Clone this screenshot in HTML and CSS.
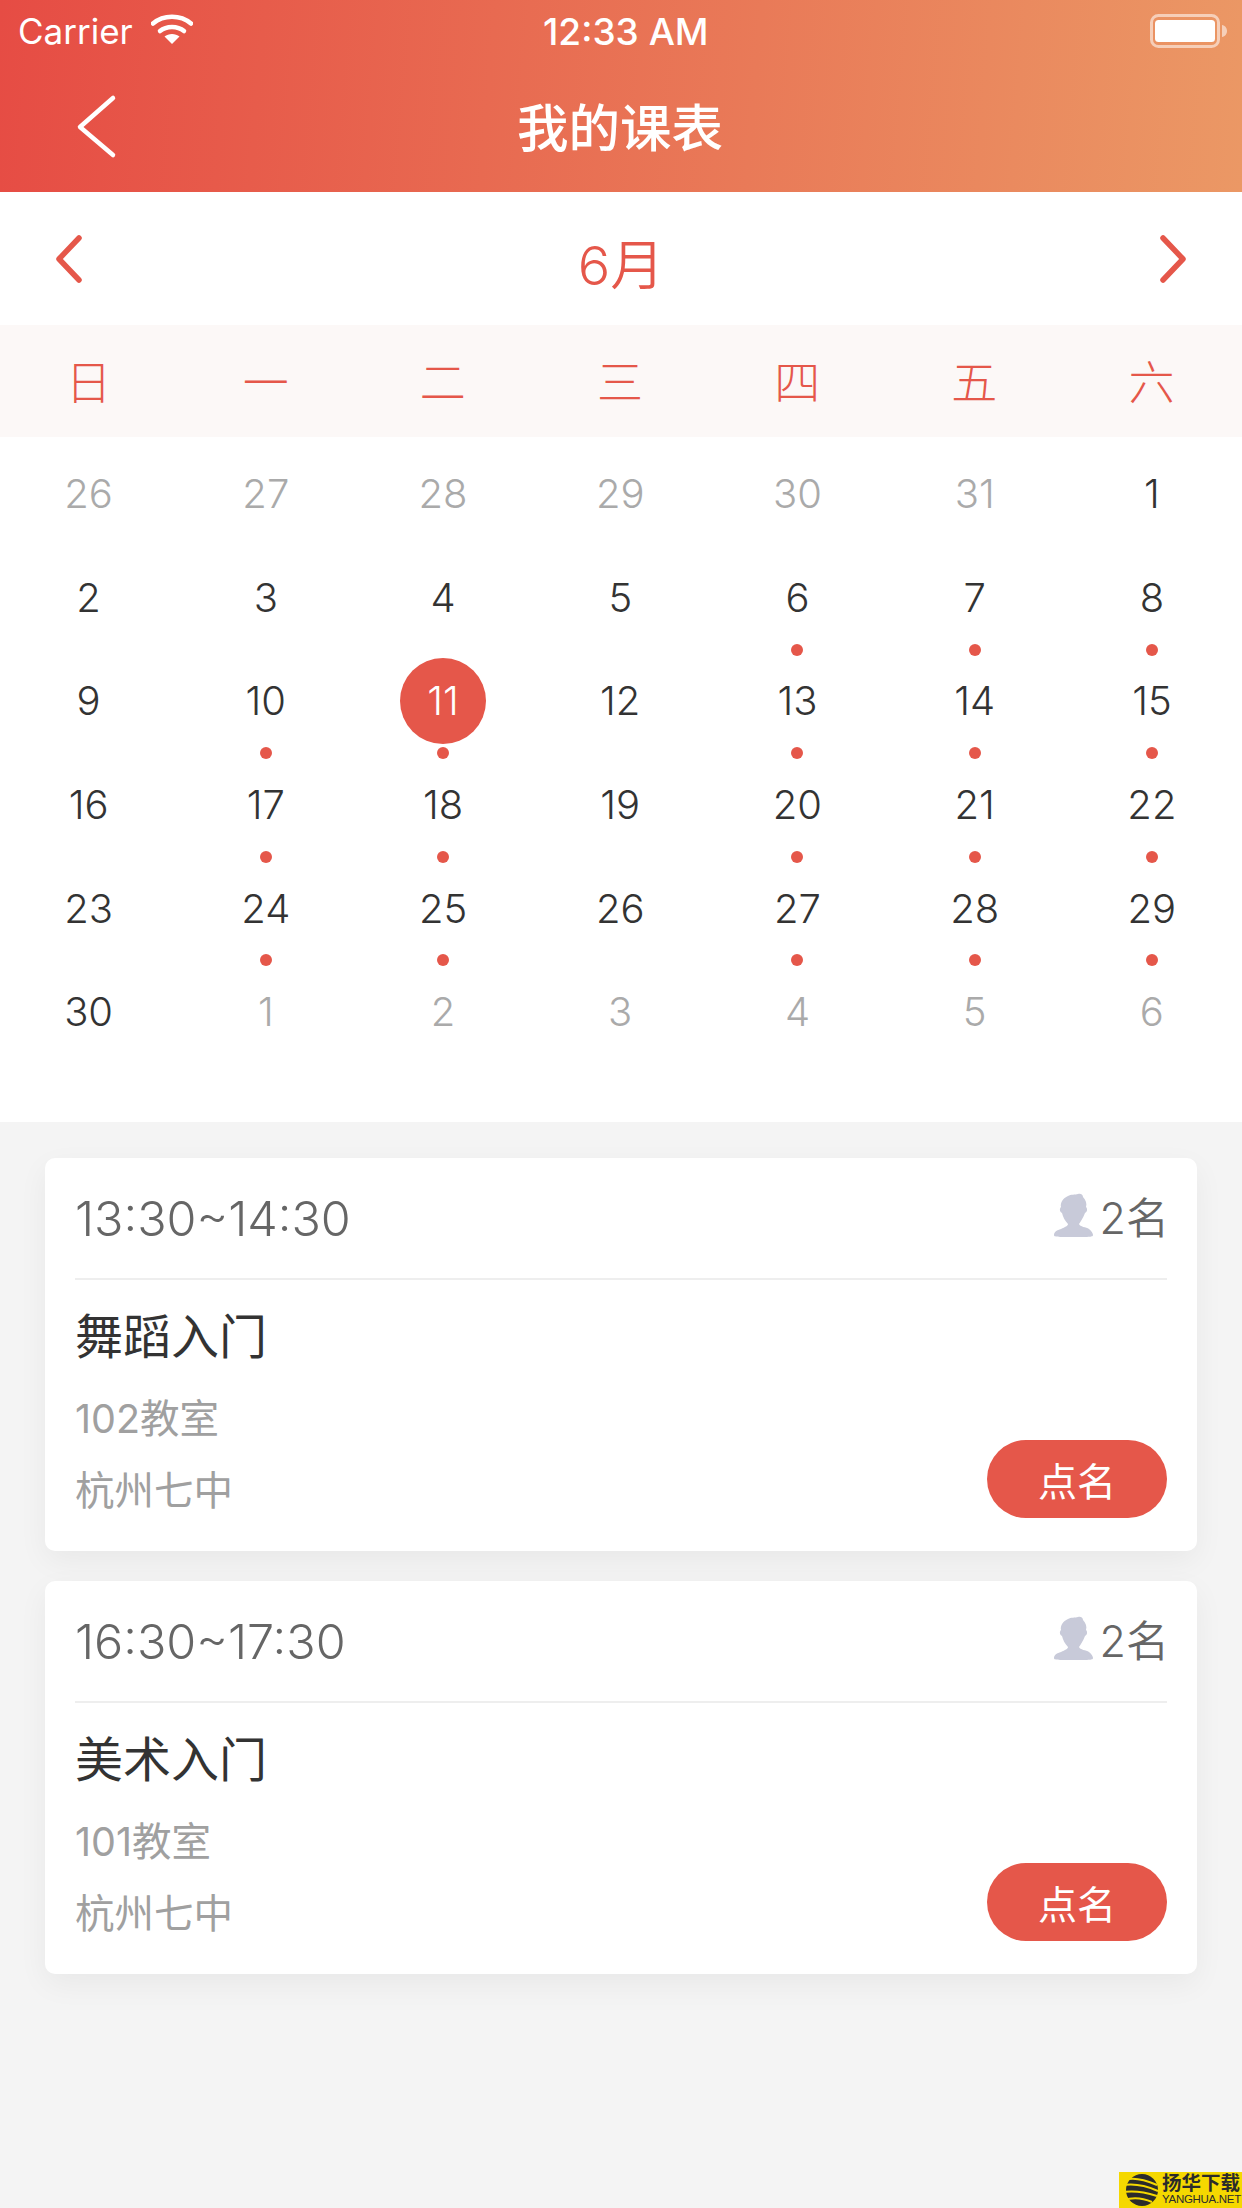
FILE: index.html
```html
<!DOCTYPE html>
<html lang="zh-CN">
<head>
    <meta charset="UTF-8">
    <meta name="viewport" content="width=device-width, initial-scale=1.0">
    <title>我的课表</title>
    <link rel="stylesheet" href="styles.css">
</head>
<body>

<div class="page">

    <header class="top">
        <div class="status">
            <div class="status-left">
                <span>Carrier</span>
                <svg class="wifi" width="42" height="30" viewBox="0 0 42 30">
                    <path d="M2 9.5C12.500 0.500 29.500 0.500 40 9.500" fill="none" stroke="#fff" stroke-width="4.500" stroke-linecap="round"/>
                    <path d="M9 17C15.500 11.500 26.500 11.500 33 17" fill="none" stroke="#fff" stroke-width="4.500" stroke-linecap="round"/>
                    <path d="M21 30L13.500 22.500C17.500 19 24.500 19 28.500 22.500Z" fill="#fff"/>
                </svg>
            </div>
            <span class="status-time">12:33 AM</span>
            <svg class="battery" width="78" height="34" viewBox="0 0 78 34">
                <rect x="1.500" y="1.500" width="67" height="31" rx="7" fill="none" stroke="#fff" stroke-opacity="0.55" stroke-width="3"/>
                <rect x="5" y="6" width="60" height="22" rx="3.500" fill="#fff"/>
                <path d="M72 11C75 11.500 77 14 77 17C77 20 75 22.500 72 23Z" fill="#fff" fill-opacity="0.55"/>
            </svg>
        </div>
        <div class="nav">
            <svg class="back" width="44" height="68" viewBox="0 0 44 68">
                <path d="M37 5L4 34L37 62" fill="none" stroke="#fff" stroke-width="4.500" stroke-linecap="round" stroke-linejoin="round"/>
            </svg>
            <h1>我的课表</h1>
        </div>
    </header>

    <section class="calendar">
        <div class="month-row">
            <svg width="26" height="50" viewBox="0 0 26 50">
                <path d="M23 4L3 25L23 46" fill="none" stroke="#e5574a" stroke-width="5.500" stroke-linecap="round" stroke-linejoin="round"/>
            </svg>
            <div class="month">6月</div>
            <svg width="26" height="50" viewBox="0 0 26 50">
                <path d="M3 4L23 25L3 46" fill="none" stroke="#e5574a" stroke-width="5.500" stroke-linecap="round" stroke-linejoin="round"/>
            </svg>
        </div>

        <div class="weekdays">
            <span>日</span><span>一</span><span>二</span><span>三</span><span>四</span><span>五</span><span>六</span>
        </div>

        <div class="days">
            <div class="day muted">26</div>
            <div class="day muted">27</div>
            <div class="day muted">28</div>
            <div class="day muted">29</div>
            <div class="day muted">30</div>
            <div class="day muted">31</div>
            <div class="day">1</div>

            <div class="day">2</div>
            <div class="day">3</div>
            <div class="day">4</div>
            <div class="day">5</div>
            <div class="day has-class">6</div>
            <div class="day has-class">7</div>
            <div class="day has-class">8</div>

            <div class="day">9</div>
            <div class="day has-class">10</div>
            <div class="day has-class today"><b>11</b></div>
            <div class="day">12</div>
            <div class="day has-class">13</div>
            <div class="day has-class">14</div>
            <div class="day has-class">15</div>

            <div class="day">16</div>
            <div class="day has-class">17</div>
            <div class="day has-class">18</div>
            <div class="day">19</div>
            <div class="day has-class">20</div>
            <div class="day has-class">21</div>
            <div class="day has-class">22</div>

            <div class="day">23</div>
            <div class="day has-class">24</div>
            <div class="day has-class">25</div>
            <div class="day">26</div>
            <div class="day has-class">27</div>
            <div class="day has-class">28</div>
            <div class="day has-class">29</div>

            <div class="day">30</div>
            <div class="day muted">1</div>
            <div class="day muted">2</div>
            <div class="day muted">3</div>
            <div class="day muted">4</div>
            <div class="day muted">5</div>
            <div class="day muted">6</div>
        </div>
    </section>

    <main class="lessons">
        <article class="card">
            <div class="card-head">
                <span class="time">13:30~14:30</span>
                <span class="count">
                    <svg width="40" height="44" viewBox="0 0 40 44">
                        <path d="M14 3C17 1 21 2 24 1C27 0 29 2 29 4C32 7 33 11 32 14C34 16 33 19 31 20C29 25 27 28 25 31C26 34 32 34 35 36C38 38 39 41 39 42C39 44 36 44 20 44C3 44 0 44 0 42C0 39 3 37 7 36C11 34 14 33 14 31C11 28 9 24 8 20C6 19 5 16 7 14C6 10 9 5 14 3Z" fill="#c8cad9"/>
                    </svg>
                    2名
                </span>
            </div>
            <div class="card-body">
                <h2>舞蹈入门</h2>
                <div class="card-foot">
                    <div class="info">
                        <p>102教室</p>
                        <p>杭州七中</p>
                    </div>
                    <button>点名</button>
                </div>
            </div>
        </article>

        <article class="card">
            <div class="card-head">
                <span class="time">16:30~17:30</span>
                <span class="count">
                    <svg width="40" height="44" viewBox="0 0 40 44">
                        <path d="M14 3C17 1 21 2 24 1C27 0 29 2 29 4C32 7 33 11 32 14C34 16 33 19 31 20C29 25 27 28 25 31C26 34 32 34 35 36C38 38 39 41 39 42C39 44 36 44 20 44C3 44 0 44 0 42C0 39 3 37 7 36C11 34 14 33 14 31C11 28 9 24 8 20C6 19 5 16 7 14C6 10 9 5 14 3Z" fill="#c8cad9"/>
                    </svg>
                    2名
                </span>
            </div>
            <div class="card-body">
                <h2>美术入门</h2>
                <div class="card-foot">
                    <div class="info">
                        <p>101教室</p>
                        <p>杭州七中</p>
                    </div>
                    <button>点名</button>
                </div>
            </div>
        </article>
    </main>

    <div class="watermark">
        <svg width="40" height="36" viewBox="0 0 40 36">
            <circle cx="23" cy="18" r="16" fill="#2b2b2b"/>
            <path d="M6 8C14 5 24 7 38 13M1 14C12 11 25 13 39 19M1 21C12 18 25 20 38 24M5 28C14 25 24 26 33 30" fill="none" stroke="#f5d800" stroke-width="2"/>
        </svg>
        <div class="watermark-text">
            <strong>扬华下载</strong>
            <span>YANGHUA.NET</span>
        </div>
    </div>

</div>

</body>
</html>
```

FILE: styles.css
```css
* {
    box-sizing: border-box;
}
body {
    margin: 0;
    background-color: #f4f4f4;
    font-family: Inter, "Noto Sans CJK SC", sans-serif;
}
.page {
    position: relative;
    width: 1242px;
    height: 2208px;
    overflow: hidden;
}

/* top bar */
.top {
    height: 192px;
    background: linear-gradient(95deg, #e64c44 0%, #eb9865 100%);
    color: #fff;
}
.status {
    height: 62px;
    display: flex;
    align-items: center;
    justify-content: space-between;
    padding: 0 14px 0 18px;
    font-size: 35px;
    position: relative;
}
.status-left {
    display: flex;
    align-items: center;
    gap: 18px;
}
.wifi {
    margin-top: -4px;
}
.status-time {
    position: absolute;
    left: 543px;
    font-size: 37px;
    font-weight: 500;
}
.nav {
    height: 130px;
    display: flex;
    align-items: center;
    justify-content: center;
    position: relative;
}
.back {
    position: absolute;
    left: 76px;
    top: 31px;
}
.nav h1 {
    margin: 0;
    font-size: 51.500px;
    font-weight: 500;
    font-family: "Noto Sans CJK SC", sans-serif;
    position: relative;
    top: -3px;
    left: -1px;
}

/* calendar */
.calendar {
    background-color: #fff;
    height: 930px;
}
.month-row {
    height: 133px;
    display: flex;
    align-items: center;
    justify-content: space-between;
    padding: 0 56px;
}
.month {
    color: #e5574a;
    font-size: 54px;
    font-weight: 350;
    padding-top: 6px;
}
.weekdays {
    height: 112px;
    background-color: #fcf8f7;
    display: grid;
    grid-template-columns: repeat(7, 1fr);
    align-items: center;
    text-align: center;
    color: #e5574a;
    font-size: 46px;
    font-weight: 300;
    padding: 0 2px 5px 0;
    font-family: "Noto Sans CJK SC", sans-serif;
}
.days {
    display: grid;
    grid-template-columns: repeat(7, 1fr);
    grid-auto-rows: 103.6px;
    padding: 5px 1.500px 0 0;
}
.day {
    position: relative;
    display: flex;
    align-items: center;
    justify-content: center;
    color: #333;
    font-size: 40px;
    font-weight: 350;
}
.day.muted {
    color: #aaa;
}
.day.has-class::after {
    content: "";
    position: absolute;
    left: 50%;
    top: 98px;
    width: 12px;
    height: 12px;
    margin-left: -6px;
    border-radius: 50%;
    background-color: #e5574a;
}
.today b {
    width: 86px;
    height: 86px;
    border-radius: 50%;
    background-color: #e5574a;
    color: #fff;
    font-weight: 300;
    display: flex;
    align-items: center;
    justify-content: center;
}

/* lesson cards */
.lessons {
    padding: 36px 45px 0;
    display: flex;
    flex-direction: column;
    gap: 30px;
}
.card {
    height: 393px;
    background-color: #fff;
    border-radius: 10px;
    box-shadow: 0 10px 30px rgba(0, 0, 0, 0.05);
    padding: 0 30px;
}
.card-head {
    height: 122px;
    border-bottom: 2px solid #eeeeee;
    display: flex;
    align-items: center;
    justify-content: space-between;
}
.time {
    color: #666;
    font-size: 48.500px;
    font-weight: 350;
}
.count {
    display: flex;
    align-items: center;
    gap: 6px;
    color: #666;
    font-size: 43px;
    font-weight: 350;
    position: relative;
    top: -3px;
    right: -2px;
}
.card-body h2 {
    margin: 0;
    padding-top: 20px;
    color: #333;
    font-size: 48px;
    line-height: 66px;
    font-weight: 400;
    font-family: "Noto Sans CJK SC", sans-serif;
}
.card-foot {
    display: flex;
    justify-content: space-between;
    align-items: flex-start;
}
.info {
    padding-top: 17px;
}
.info p {
    margin: 0;
    color: #a0a0a0;
    font-size: 39.500px;
    line-height: 72px;
}
.card-foot button {
    width: 180px;
    height: 78px;
    margin-top: 74px;
    border: none;
    border-radius: 39px;
    background-color: #e5574a;
    color: #fff;
    font-size: 39px;
    font-family: "Noto Sans CJK SC", sans-serif;
}

/* watermark */
.watermark {
    position: absolute;
    right: 0;
    bottom: 0;
    width: 123px;
    height: 36px;
    background-color: #f5d800;
    display: flex;
    align-items: center;
    gap: 3px;
    color: #2b2b2b;
}
.watermark svg {
    flex: none;
}
.watermark-text {
    display: flex;
    flex-direction: column;
}
.watermark-text strong {
    font-size: 19.500px;
    line-height: 18px;
    white-space: nowrap;
    font-family: "Liberation Sans", "Noto Sans CJK SC", sans-serif;
}
.watermark-text span {
    font-size: 11.500px;
    line-height: 14px;
    letter-spacing: -0.3px;
    white-space: nowrap;
    font-family: "Liberation Sans", sans-serif;
}
```
